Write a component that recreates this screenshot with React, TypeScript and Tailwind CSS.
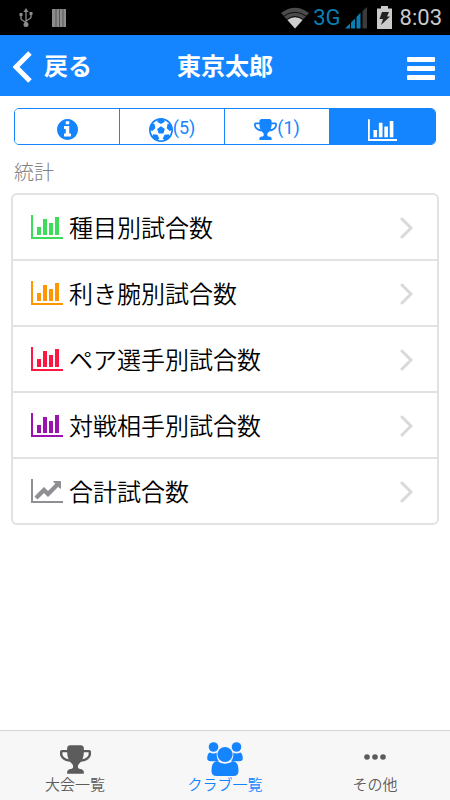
import React from "react";

interface IconProps {
  className?: string;
}

const BAR_CHART =
  "M640 896v512h-256v-512h256zM1024 384v1024h-256v-1024h256zM2048 1536v128h-2048v-1536h128v1408h1920zM1408 640v768h-256v-768h256zM1792 256v1152h-256v-1152h256z";
const LINE_CHART =
  "M2048 1536v128h-2048v-1536h128v1408h1920zM1920 288v435q0 21-19.500 29.500t-35.500-7.500l-121-121-633 633q-10 10-23 10t-23-10l-233-233-416 416-192-192 585-585q10-10 23-10t23 10l233 233 464-464-121-121q-16-16-7.500-35.500t29.500-19.500h435q14 0 23 9t9 23z";

function BarChartIcon({ className }: IconProps) {
  return (
    <svg viewBox="0 128 2048 1536" fill="currentColor" className={className} aria-hidden="true">
      <path d={BAR_CHART} />
    </svg>
  );
}

function LineChartIcon({ className }: IconProps) {
  return (
    <svg viewBox="0 128 2048 1536" fill="currentColor" className={className} aria-hidden="true">
      <path d={LINE_CHART} />
    </svg>
  );
}

function TrophyIcon({ className }: IconProps) {
  return (
    <svg viewBox="64 128 1664 1536" fill="currentColor" className={className} aria-hidden="true">
      <path d="M522 883q-74-162-74-371h-256v96q0 78 94.500 162t235.500 113zm1078-275v-96h-256q0 209-74 371 141-29 235.500-113t94.500-162zm128-128v128q0 71-41.500 143t-112 130-173 97.500-215.500 44.500q-42 54-95 95-38 34-52.500 72.500t-14.500 89.500q0 54 30.500 91t97.500 37q75 0 133.500 45.500t58.500 114.500v64q0 14-9 23t-23 9h-832q-14 0-23-9t-9-23v-64q0-69 58.500-114.500t133.500-45.500q67 0 97.500-37t30.500-91q0-51-14.500-89.500t-52.500-72.500q-53-41-95-95-113-5-215.500-44.500t-173-97.500-112-130-41.500-143v-128q0-40 28-68t68-28h288v-96q0-66 47-113t113-47h576q66 0 113 47t47 113v96h288q40 0 68 28t28 68z" />
    </svg>
  );
}

function InfoIcon({ className }: IconProps) {
  return (
    <svg viewBox="128 128 1536 1536" fill="currentColor" className={className} aria-hidden="true">
      <path d="M1152 1376v-160q0-14-9-23t-23-9h-96v-512q0-14-9-23t-23-9h-320q-14 0-23 9t-9 23v160q0 14 9 23t23 9h96v320h-96q-14 0-23 9t-9 23v160q0 14 9 23t23 9h448q14 0 23-9t9-23zm-128-896v-160q0-14-9-23t-23-9h-192q-14 0-23 9t-9 23v160q0 14 9 23t23 9h192q14 0 23-9t9-23zm640 416q0 209-103 385.500t-279.500 279.500-385.500 103-385.500-103-279.500-279.500-103-385.500 103-385.500 279.500-279.500 385.500-103 385.500 103 279.500 279.500 103 385.500z" />
    </svg>
  );
}

function BallIcon({ className }: IconProps) {
  return (
    <svg viewBox="0 0 1792 1792" fill="currentColor" className={className} aria-hidden="true">
      <path d="M609 816l287-208 287 208-109 336h-355zm287-816q182 0 348 71t286 191 191 286 71 348-71 348-191 286-286 191-348 71-348-71-286-191-191-286-71-348 71-348 191-286 286-191 348-71zm619 1350q149-203 149-454v-3l-102 89-240-224 63-323 134 12q-150-206-389-282l53 124-287 159-287-159 53-124q-239 76-389 282l135-12 62 323-240 224-102-89v3q0 251 149 454l30-132 326 40 139 298-116 69q117 39 240 39t240-39l-116-69 139-298 326-40z" />
    </svg>
  );
}

function UsersIcon({ className }: IconProps) {
  return (
    <svg viewBox="0 0 36 34" fill="currentColor" className={className} aria-hidden="true">
      <circle cx="6.500" cy="5" r="4.800" />
      <circle cx="29.500" cy="5" r="4.800" />
      <circle cx="18" cy="12.500" r="7.600" />
      <path d="M2.500 10.500Q6.500 12.500 9.800 10.800Q9 16 12 19.200H4Q0 19.200.2 16Q.5 11.500 2.500 10.500z" />
      <path d="M33.500 10.500Q29.500 12.500 26.200 10.800Q27 16 24 19.200H32Q36 19.200 35.800 16Q35.500 11.500 33.500 10.500z" />
      <path d="M10 19Q18 24.500 26 19Q31.500 19.500 31.500 29Q31.500 34 26.500 34H9.500Q4.500 34 4.500 29Q4.500 19.500 10 19z" />
    </svg>
  );
}

function MoreIcon({ className }: IconProps) {
  return (
    <svg viewBox="0 0 22 32" fill="currentColor" className={className} aria-hidden="true">
      <circle cx="3" cy="14" r="2.8" />
      <circle cx="11" cy="14" r="2.8" />
      <circle cx="19" cy="14" r="2.8" />
    </svg>
  );
}

const rows = [
  { label: "種目別試合数", icon: BarChartIcon, color: "text-[#3ddc5b]" },
  { label: "利き腕別試合数", icon: BarChartIcon, color: "text-[#ff9500]" },
  { label: "ペア選手別試合数", icon: BarChartIcon, color: "text-[#ff1744]" },
  { label: "対戦相手別試合数", icon: BarChartIcon, color: "text-[#9c12b0]" },
  { label: "合計試合数", icon: LineChartIcon, color: "text-[#8e8e93]" },
];

const segments = [
  { name: "情報", icon: InfoIcon, size: "h-[21px] w-[21px]", count: "" },
  { name: "試合", icon: BallIcon, size: "h-6 w-6", count: "(5)" },
  { name: "入賞", icon: TrophyIcon, size: "h-[21px] w-[23px]", count: "(1)" },
  { name: "統計", icon: BarChartIcon, size: "h-[22px] w-[29px]", count: "" },
];

const navItems = [
  { label: "大会一覧", icon: TrophyIcon, size: "h-[29px] w-[31px]", active: false },
  { label: "クラブ一覧", icon: UsersIcon, size: "h-[34px] w-9", active: true },
  { label: "その他", icon: MoreIcon, size: "h-8 w-[22px]", active: false },
];

function StatusBar() {
  return (
    <div className="flex h-[35px] items-center justify-between bg-black pl-[19px] pr-2">
      <div className="flex items-center gap-[19px]">
        {/* USB */}
        <svg viewBox="0 0 14 20" fill="none" stroke="#8c8c8c" strokeWidth="1.3" className="h-5 w-[14px]" aria-hidden="true">
          <path d="M7 3v13M2 7v3.500q0 1 1 1.500l4 2.500M12 6v3q0 1-1 1.500l-4 2.500" />
          <path d="M7 0l2.500 4h-5zM.5 5h3v3h-3zM10.500 4h3v3h-3z" fill="#8c8c8c" stroke="none" />
          <circle cx="7" cy="16.500" r="2.500" fill="#8c8c8c" stroke="none" />
        </svg>
        <svg viewBox="0 0 14 18" className="h-[18px] w-[14px]" aria-hidden="true">
          <path d="M0 0h14v18H0z" fill="#8c8c8c" />
          <path d="M4 0v18M7.500 0v18M11 0v18" stroke="#4a4a4a" strokeWidth=".8" />
        </svg>
      </div>
      <div className="flex items-center">
        <svg viewBox="0 0 28 22" className="h-[22px] w-7" aria-hidden="true">
          <path d="M14 21.500L0 6Q14-4.500 28 6z" fill="#4b4b4b" />
          <path d="M14 21.500L6.500 13Q14 7.500 21.500 13z" fill="#cfcfcf" />
          <path d="M2 9.500Q14 1 26 9.500" fill="none" stroke="#000" strokeWidth=".8" />
          <path d="M5 13Q14 6 23 13" fill="none" stroke="#000" strokeWidth=".8" />
        </svg>
        <span className="ml-1 text-[22px] leading-8 text-[#0a7fb4]">3G</span>
        <svg viewBox="0 0 22 22" className="ml-1 h-[22px] w-[22px]" aria-hidden="true">
          <path d="M0 21.500L5 16.500V21.500zM6 15.500L10 11.500V21.500H6zM11.500 10L15.500 5.500V21.500H11.500z" fill="#0a7fb4" />
          <path d="M17.500 4L22 0V21.500H17.500z" fill="#3a3a3a" />
        </svg>
        <svg viewBox="0 0 15 23" className="ml-2.5 h-[23px] w-[15px]" aria-hidden="true">
          <path d="M0 2.500h4V0h7v2.500h4V23H0z" fill="#cacaca" />
          <path d="M5 6h7l-2 4.500h3L4 19l2-6H2.500z" fill="#222" />
        </svg>
        <span className="ml-2 text-[22px] leading-8 text-[#c9c9c9]">8:03</span>
      </div>
    </div>
  );
}

export default function App() {
  return (
    <div className="flex min-h-screen flex-col bg-white font-['Roboto','Noto_Sans_CJK_JP',sans-serif] text-black">
      <StatusBar />

      <header className="grid h-[61px] grid-cols-[1fr_auto_1fr] items-center bg-[#1485ff] px-[13px] pt-0.5 text-white">
        <button type="button" className="flex items-center gap-3 justify-self-start text-2xl font-bold">
          <svg viewBox="0 0 19 32" fill="none" stroke="currentColor" strokeWidth="5" className="h-8 w-[19px]" aria-hidden="true">
            <path d="M17 2L3 16L17 30" />
          </svg>
          戻る
        </button>
        <h1 className="text-2xl font-bold">東京太郎</h1>
        <button type="button" aria-label="メニュー" className="mr-0.5 justify-self-end">
          <svg viewBox="0 0 28 24" fill="currentColor" className="mt-1 h-6 w-7" aria-hidden="true">
            <rect y="0" width="28" height="5" rx="1" />
            <rect y="9" width="28" height="5" rx="1" />
            <rect y="18" width="28" height="5" rx="1" />
          </svg>
        </button>
      </header>

      <main className="flex-1 px-[11px] pt-3">
        <div className="mx-[3px] grid h-[37px] grid-cols-4 divide-x divide-[#1485ff] overflow-hidden rounded-[5px] border border-[#1485ff]">
          {segments.map(({ name, icon: Icon, size, count }, i) => (
            <button
              key={name}
              type="button"
              aria-label={name}
              className={`flex items-center justify-center text-lg ${i === 3 ? "bg-[#1485ff] text-white" : "bg-white text-[#1485ff]"}`}
            >
              <Icon className={`mt-1.5 ${size}`} />
              {count && <span className="pt-0.5">{count}</span>}
            </button>
          ))}
        </div>

        <h2 className="mx-[3px] mt-3.5 text-xl leading-7 font-light text-[#808080]">統計</h2>

        <ul className="mt-1.5 divide-y-2 divide-[#e2e2e2] rounded-md border-2 border-[#e2e2e2]">
          {rows.map(({ label, icon: Icon, color }) => (
            <li key={label}>
              <a href="#" className="flex h-16 items-center pr-6 pl-[18px] text-2xl">
                <Icon className={`h-6 w-8 ${color}`} />
                <span className="ml-1.5 flex-1 pt-1 font-[350]">{label}</span>
                <svg viewBox="0 0 13 22" fill="none" stroke="#d9d9d9" strokeWidth="3" strokeLinecap="round" className="mt-0.5 h-[22px] w-[13px]" aria-hidden="true">
                  <path d="M2 2L11 11L2 20" />
                </svg>
              </a>
            </li>
          ))}
        </ul>
      </main>

      <nav className="grid h-[70px] grid-cols-3 border-t border-[#d4d4d4] bg-[#f7f7f7]">
        {navItems.map(({ label, icon: Icon, size, active }) => (
          <a
            key={label}
            href="#"
            className={`flex flex-col items-center text-[15px] leading-5 font-[350] ${active ? "text-[#1485ff]" : "text-[#5c5c5c]"}`}
          >
            <span className="flex h-11 items-center pt-3">
              <Icon className={size} />
            </span>
            {label}
          </a>
        ))}
      </nav>
    </div>
  );
}
